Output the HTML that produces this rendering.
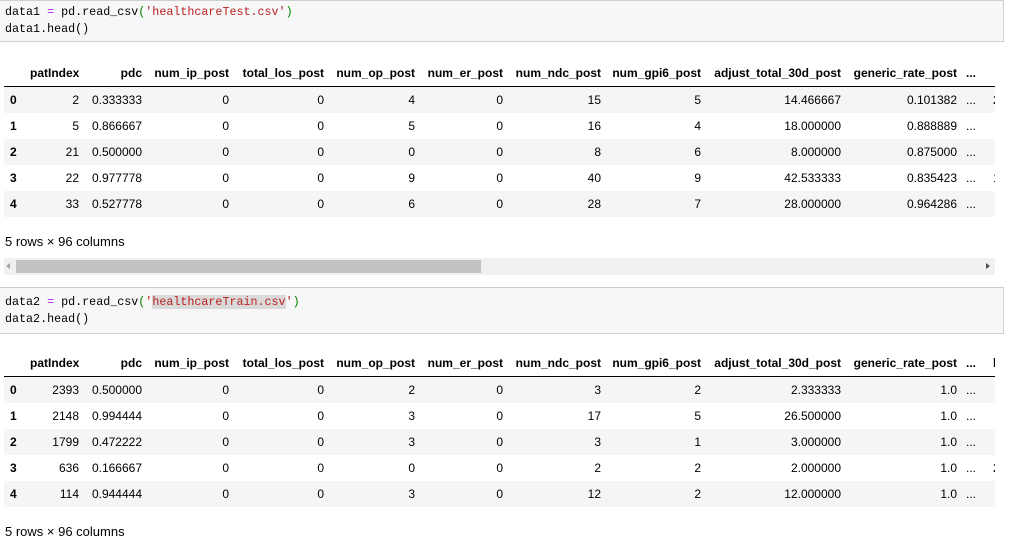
<!DOCTYPE html>
<html><head><meta charset="utf-8"><style>
body{margin:0;width:1009px;height:541px;background:#fff;overflow:hidden;position:relative;font-family:"Liberation Sans",Arial,sans-serif;font-size:12px;color:#000}
.code{position:absolute;left:-1px;width:1005px;background:#f7f7f7;border:1px solid #cfcfcf;font-family:"Liberation Mono",monospace;font-size:11.7px;line-height:17px;padding:3px 0 0 5px;box-sizing:border-box;color:#000}
.k{color:#aa22ff}.s{color:#ba2121}.p{color:#008000}
.tb{position:absolute;left:4px;width:991px;overflow:hidden}
table{border-collapse:collapse;table-layout:fixed;width:1010px}
th{font-weight:bold;text-align:right;height:26px;padding:0;border-bottom:1px solid #000;white-space:nowrap;overflow:hidden}
td{text-align:right;height:26px;padding:0;white-space:nowrap;overflow:hidden}
tr.g td{background:#f5f5f5}
td.i,th.i{text-align:left;padding-left:6px;font-weight:bold}
td.d,th.d{text-align:center}
td.x,th.x{text-align:left;padding-left:8px}
.foot{position:absolute;left:5px;font-size:13px}
</style></head><body>
<div class="code" style="top:0;height:42px">data1 <span class="k">=</span> pd.read_csv<span class="p">(</span><span class="s">'healthcareTest.csv'</span><span class="p">)</span><br>data1.head()</div>
<div class="tb" style="top:60px">
<table><colgroup><col style="width:26px"><col style="width:49px"><col style="width:63px"><col style="width:87px"><col style="width:95px"><col style="width:91px"><col style="width:88px"><col style="width:98px"><col style="width:100px"><col style="width:140px"><col style="width:116px"><col style="width:28px"><col style="width:29px"></colgroup>
<tr><th class="i"></th><th>patIndex</th><th>pdc</th><th>num_ip_post</th><th>total_los_post</th><th>num_op_post</th><th>num_er_post</th><th>num_ndc_post</th><th>num_gpi6_post</th><th>adjust_total_30d_post</th><th>generic_rate_post</th><th class="d">...</th><th class="x"></th></tr>
<tr class="g"><td class="i">0</td><td>2</td><td>0.333333</td><td>0</td><td>0</td><td>4</td><td>0</td><td>15</td><td>5</td><td>14.466667</td><td>0.101382</td><td class="d">...</td><td class="x">2</td></tr>
<tr><td class="i">1</td><td>5</td><td>0.866667</td><td>0</td><td>0</td><td>5</td><td>0</td><td>16</td><td>4</td><td>18.000000</td><td>0.888889</td><td class="d">...</td><td class="x"></td></tr>
<tr class="g"><td class="i">2</td><td>21</td><td>0.500000</td><td>0</td><td>0</td><td>0</td><td>0</td><td>8</td><td>6</td><td>8.000000</td><td>0.875000</td><td class="d">...</td><td class="x"></td></tr>
<tr><td class="i">3</td><td>22</td><td>0.977778</td><td>0</td><td>0</td><td>9</td><td>0</td><td>40</td><td>9</td><td>42.533333</td><td>0.835423</td><td class="d">...</td><td class="x">1</td></tr>
<tr class="g"><td class="i">4</td><td>33</td><td>0.527778</td><td>0</td><td>0</td><td>6</td><td>0</td><td>28</td><td>7</td><td>28.000000</td><td>0.964286</td><td class="d">...</td><td class="x"></td></tr>
</table></div>
<div class="foot" style="top:234px">5 rows × 96 columns</div>
<div style="position:absolute;left:4px;top:258px;width:991px;height:17px;background:#f1f1f1"></div>
<div style="position:absolute;left:16px;top:260px;width:465px;height:13px;background:#c1c1c1"></div>
<div style="position:absolute;left:6px;top:263px;width:0;height:0;border-top:3px solid transparent;border-bottom:3px solid transparent;border-right:4px solid #a3a3a3"></div>
<div style="position:absolute;left:986px;top:263px;width:0;height:0;border-top:3px solid transparent;border-bottom:3px solid transparent;border-left:4px solid #505050"></div>
<div class="code" style="top:287px;height:47px;padding-top:6px">data2 <span class="k">=</span> pd.read_csv<span class="p">(</span><span class="s">'<span style="background:#d9d9d9">healthcareTrain.csv</span>'</span><span class="p">)</span><br>data2.head()</div>
<div class="tb" style="top:350px">
<table><colgroup><col style="width:26px"><col style="width:49px"><col style="width:63px"><col style="width:87px"><col style="width:95px"><col style="width:91px"><col style="width:88px"><col style="width:98px"><col style="width:100px"><col style="width:140px"><col style="width:116px"><col style="width:28px"><col style="width:29px"></colgroup>
<tr><th class="i"></th><th>patIndex</th><th>pdc</th><th>num_ip_post</th><th>total_los_post</th><th>num_op_post</th><th>num_er_post</th><th>num_ndc_post</th><th>num_gpi6_post</th><th>adjust_total_30d_post</th><th>generic_rate_post</th><th class="d">...</th><th class="x">b</th></tr>
<tr class="g"><td class="i">0</td><td>2393</td><td>0.500000</td><td>0</td><td>0</td><td>2</td><td>0</td><td>3</td><td>2</td><td>2.333333</td><td>1.0</td><td class="d">...</td><td class="x"></td></tr>
<tr><td class="i">1</td><td>2148</td><td>0.994444</td><td>0</td><td>0</td><td>3</td><td>0</td><td>17</td><td>5</td><td>26.500000</td><td>1.0</td><td class="d">...</td><td class="x"></td></tr>
<tr class="g"><td class="i">2</td><td>1799</td><td>0.472222</td><td>0</td><td>0</td><td>3</td><td>0</td><td>3</td><td>1</td><td>3.000000</td><td>1.0</td><td class="d">...</td><td class="x"></td></tr>
<tr><td class="i">3</td><td>636</td><td>0.166667</td><td>0</td><td>0</td><td>0</td><td>0</td><td>2</td><td>2</td><td>2.000000</td><td>1.0</td><td class="d">...</td><td class="x">2</td></tr>
<tr class="g"><td class="i">4</td><td>114</td><td>0.944444</td><td>0</td><td>0</td><td>3</td><td>0</td><td>12</td><td>2</td><td>12.000000</td><td>1.0</td><td class="d">...</td><td class="x"></td></tr>
</table></div>
<div class="foot" style="top:524px">5 rows × 96 columns</div>
</body></html>
